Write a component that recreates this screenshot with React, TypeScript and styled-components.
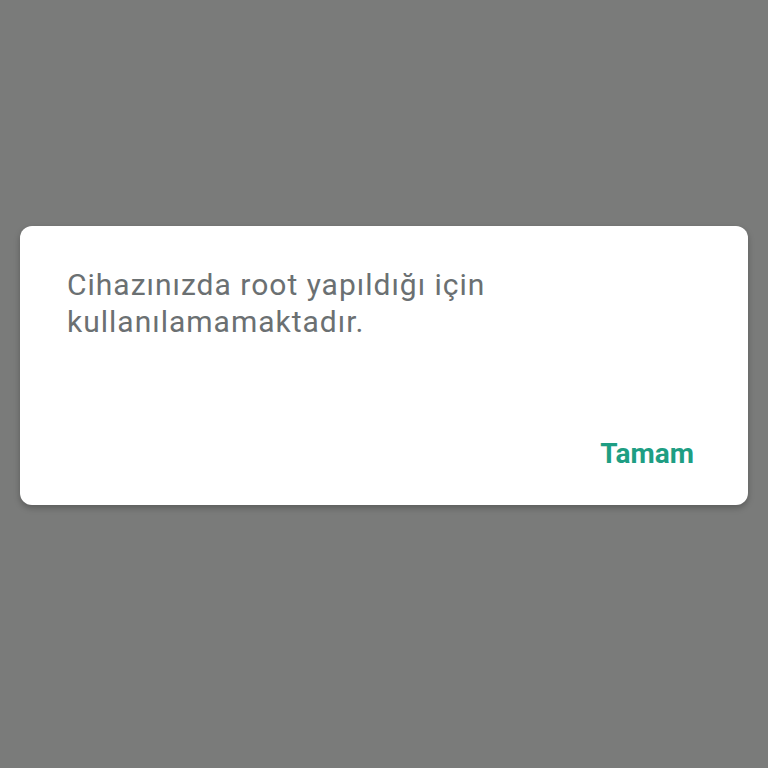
import React from "react";
import styled, { createGlobalStyle } from "styled-components";

const Global = createGlobalStyle`
  html, body { margin: 0; padding: 0; background: #7a7b7a; }
  body { font-family: Roboto, "Noto Sans", sans-serif; }
`;

const Page = styled.div`
  min-height: 768px;
  box-sizing: border-box;
  padding: 226px 20px 0;
  background: #7a7b7a;
`;

const Dialog = styled.div`
  background: #ffffff;
  border-radius: 12px;
  height: 279px;
  box-sizing: border-box;
  padding: 40px 54px 0 47px;
  display: flex;
  flex-direction: column;
  box-shadow: 0 3px 6px rgba(0, 0, 0, 0.25);
`;

const Message = styled.p`
  margin: 0;
  font-size: 30px;
  line-height: 37px;
  letter-spacing: 1px;
  color: #6b7072;
  font-weight: 400;
`;

const Actions = styled.div`
  display: flex;
  justify-content: flex-end;
  margin-top: 96px;
`;

const Button = styled.button`
  border: none;
  background: none;
  padding: 0;
  font-family: Roboto, sans-serif;
  font-size: 28px;
  font-weight: 700;
  color: #1e9e83;
  line-height: 36px;
`;

export default function App() {
  return (
    <>
      <Global />
      <Page>
        <Dialog>
          <Message>
            Cihazınızda root yapıldığı için
            <br />
            kullanılamamaktadır.
          </Message>
          <Actions>
            <Button>Tamam</Button>
          </Actions>
        </Dialog>
      </Page>
    </>
  );
}
